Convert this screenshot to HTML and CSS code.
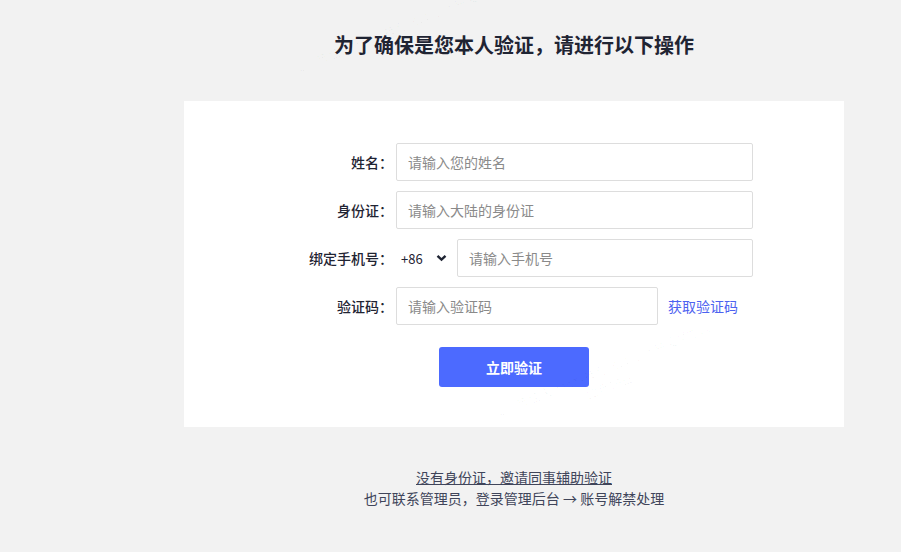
FILE: index.html
```html
<!DOCTYPE html>
<html lang="zh-CN">
<head>
    <meta charset="UTF-8">
    <meta name="viewport" content="width=device-width, initial-scale=1.0">
    <title>身份验证</title>
    <link rel="stylesheet" href="styles.css">
</head>
<body>
    <div class="page">
        <h1 class="title">为了确保是您本人验证，请进行以下操作</h1>

        <div class="card">
            <div class="form">
                <label class="label">姓名：</label>
                <input class="field" type="text" placeholder="请输入您的姓名">

                <label class="label">身份证：</label>
                <input class="field" type="text" placeholder="请输入大陆的身份证">

                <label class="label">绑定手机号：</label>
                <div class="phone">
                    <div class="area">
                        <span>+86</span>
                        <svg width="11" height="8" viewBox="0 0 11 8"><path d="M1.5 1.8 L5.5 5.6 L9.5 1.8" fill="none" stroke="#1f2433" stroke-width="2.4"/></svg>
                    </div>
                    <input class="field" type="text" placeholder="请输入手机号">
                </div>

                <label class="label">验证码：</label>
                <div class="code">
                    <input class="field" type="text" placeholder="请输入验证码">
                    <a class="send" href="#">获取验证码</a>
                </div>
            </div>
            <div class="actions">
                <button class="submit">立即验证</button>
            </div>
        </div>

        <div class="footer">
            <a href="#">没有身份证，邀请同事辅助验证</a>
            <p>也可联系管理员，登录管理后台 → 账号解禁处理</p>
        </div>
    </div>

    <!-- 水印 -->
    <div class="mark mark1">厦门市佳庆网络科技有限公司 网易灵犀办公<br>12月19日</div>
    <div class="mark mark2">厦门市佳庆网络科技有限公司 网易灵犀办公<br>12月19日</div>
</body>
</html>
```

FILE: styles.css
```css
body {
    margin: 0;
    padding: 0;
    background-color: #f2f2f2;
    font-family: "Noto Sans CJK SC", "Noto Sans", sans-serif;
    color: #333;
    overflow: hidden;
}
.page {
    width: 660px;
    margin-left: 184px;
    padding-top: 29px;
}
.title {
    margin: 0;
    height: 32px;
    line-height: 32px;
    text-align: center;
    font-size: 20px;
    font-weight: bold;
    color: #1f2433;
}
.card {
    margin-top: 40px;
    background-color: #fff;
    padding: 42px 0 40px;
}
.form {
    display: grid;
    grid-template-columns: 209px 357px;
    column-gap: 3px;
    row-gap: 10px;
}
.label {
    height: 38px;
    line-height: 38px;
    text-align: right;
    font-size: 14px;
    font-weight: 500;
    color: #1f2433;
}
.field {
    box-sizing: border-box;
    height: 38px;
    width: 100%;
    padding: 0 11px;
    border: 1px solid #ddd;
    border-radius: 2px;
    font-family: inherit;
    font-size: 14px;
    color: #333;
    outline: none;
}
.field::placeholder {
    color: #8a8a8a;
}
.phone {
    display: flex;
    align-items: center;
}
.area {
    width: 61px;
    flex: none;
    display: flex;
    align-items: center;
    gap: 13px;
    padding-left: 5px;
    box-sizing: border-box;
    font-size: 13px;
    color: #1f2433;
}
.code {
    display: flex;
    align-items: center;
    width: 447px;
}
.code .field {
    width: 262px;
    flex: none;
}
.send {
    margin-left: 10px;
    font-size: 14px;
    color: #4d62f0;
    text-decoration: none;
    white-space: nowrap;
}
.actions {
    display: flex;
    justify-content: center;
    margin-top: 22px;
}
.submit {
    width: 150px;
    height: 40px;
    border: none;
    border-radius: 3px;
    background-color: #4c6aff;
    color: #fff;
    font-family: inherit;
    font-size: 14px;
    font-weight: bold;
    cursor: pointer;
}
.footer {
    margin-top: 40px;
    text-align: center;
    font-size: 14px;
    line-height: 21px;
    color: #40455a;
}
.footer a {
    color: #40455a;
    text-decoration: underline;
}
.footer p {
    margin: 0;
}
.mark {
    position: absolute;
    font-size: 12px;
    line-height: 18px;
    color: rgba(0, 0, 0, 0.03);
    text-align: center;
    transform: rotate(-22deg);
    pointer-events: none;
    white-space: nowrap;
}
.mark1 {
    top: 16px;
    left: 290px;
}
.mark2 {
    top: 360px;
    left: 490px;
}
```
